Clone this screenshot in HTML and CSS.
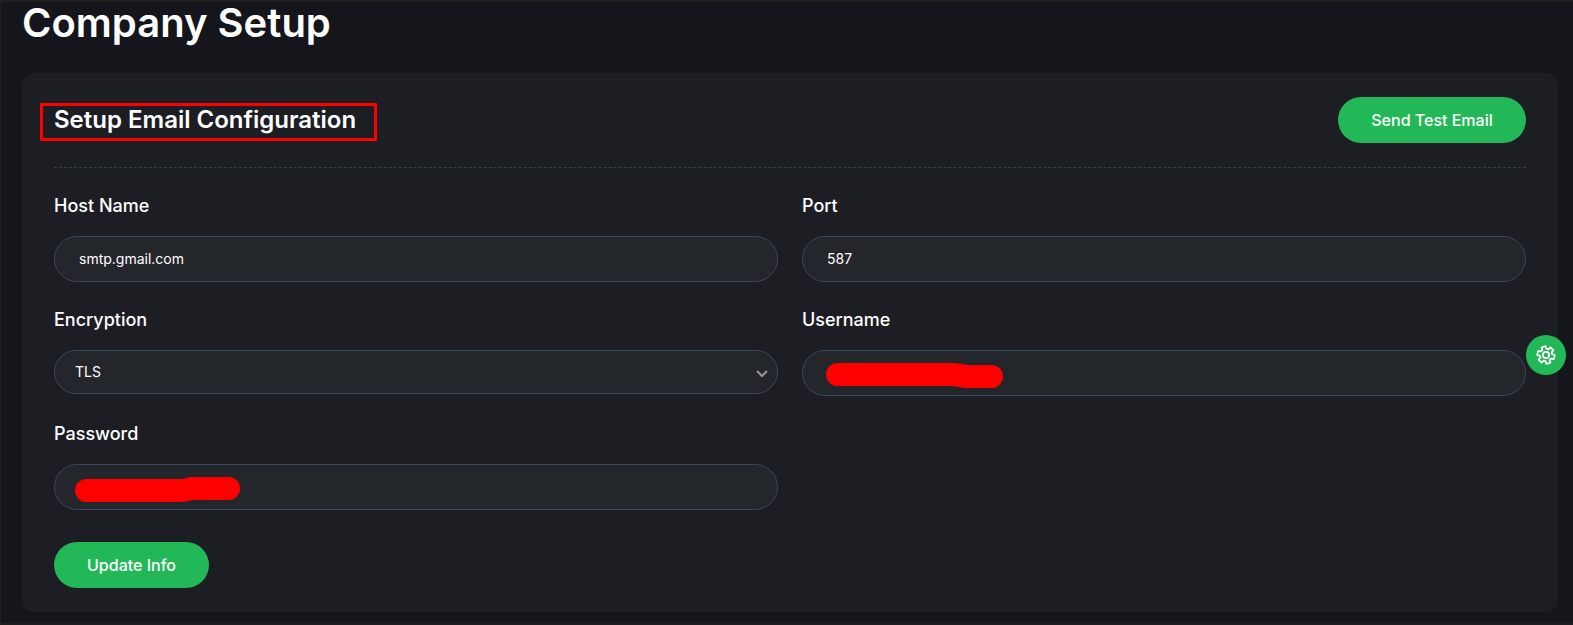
FILE: index.html
```html
<!DOCTYPE html>
<html lang="en">
<head>
<meta charset="utf-8">
<title>Company Setup</title>
<link rel="stylesheet" href="styles.css">
</head>
<body>
<main class="page">
  <h1 class="page-title">Company Setup</h1>
  <section class="card">
    <header class="card-header">
      <h2 class="card-title">Setup Email Configuration<span class="highlight"></span></h2>
      <button class="btn btn-test" type="button">Send Test Email</button>
    </header>
    <form class="form">
      <div class="field">
        <label class="label" for="host">Host Name</label>
        <input class="control" id="host" type="text" value="smtp.gmail.com">
      </div>
      <div class="field">
        <label class="label" for="port">Port</label>
        <input class="control" id="port" type="text" value="587">
      </div>
      <div class="field">
        <label class="label" for="encryption">Encryption</label>
        <div class="select-wrap">
          <select class="control select" id="encryption"><option>TLS</option></select>
          <svg class="chevron" viewBox="0 0 12 8" aria-hidden="true"><path d="M1 1l5 5 5-5"/></svg>
        </div>
      </div>
      <div class="field">
        <label class="label" for="username">Username</label>
        <div class="masked">
          <input class="control" id="username" type="text">
          <svg class="scribble scribble-user" viewBox="0 0 178 26" aria-hidden="true"><path d="M11.5 11.5H126Q134 12 140 13.500H165.500"/></svg>
        </div>
      </div>
      <div class="field">
        <label class="label" for="password">Password</label>
        <div class="masked">
          <input class="control" id="password" type="password">
          <svg class="scribble scribble-pass" viewBox="0 0 166 26" aria-hidden="true"><path d="M11.500 13.500H107Q111 13.500 116 11.500H153.500"/></svg>
        </div>
      </div>
    </form>
    <button class="btn" type="button">Update Info</button>
  </section>
</main>
<button class="settings" type="button" aria-label="Settings">
  <svg class="gear" viewBox="-10 -10 20 20" aria-hidden="true">
    <path d="M-3.730-4.950L-4.400-7.620L-.31-8.790L.54-6.180L2.420-5.710L4.400-7.620L7.460-4.660L5.620-2.620L6.150-.76L8.800 0L7.770 4.130L5.080 3.560L3.730 4.950L4.400 7.620L.31 8.790L-.54 6.180L-2.420 5.710L-4.400 7.620L-7.460 4.660L-5.620 2.620L-6.150 .76L-8.800 0L-7.770-4.130L-5.080-3.560z"/>
    <circle r="3.1"/>
  </svg>
</button>
</body>
</html>
```
FILE: styles.css
```css
* { box-sizing: border-box; }

body {
  margin: 0;
  height: 625px;
  overflow: hidden;
  border: solid #1f1f1f;
  border-width: 2px 0 2px 1px;
  background: #15161b;
  color: #fff;
  font-family: Inter, "Liberation Sans", sans-serif;
}

.page { padding: 0 15px 0 21px; }

.page-title {
  margin: 0;
  height: 71px;
  font-size: 40px;
  font-weight: 600;
  line-height: 42px;
}

.card {
  height: 539px;
  padding: 24px 32px;
  border-radius: 12px;
  background: #1d1e24;
}

.card-header {
  display: flex;
  align-items: flex-start;
  justify-content: space-between;
  height: 71px;
  margin-bottom: 24px;
  border-bottom: 1px dashed #24483a;
}

.card-title {
  position: relative;
  margin: 0;
  font-size: 24px;
  font-weight: 600;
  line-height: 46px;
}

.highlight {
  position: absolute;
  top: 6px;
  left: -14px;
  width: 337px;
  height: 38px;
  border: 3px solid #f00;
  border-radius: 1px;
}

.btn {
  height: 46px;
  padding: 0 33px;
  border: 0;
  border-radius: 23px;
  background: #22b858;
  color: #fff;
  font: 500 16px/24px Inter, "Liberation Sans", sans-serif;
}

.btn-test { width: 188px; white-space: nowrap; }

.form {
  display: grid;
  grid-template-columns: 1fr 1fr;
  gap: 24px;
  margin-bottom: 32px;
}

.field { height: 90px; }

.label {
  display: block;
  height: 44px;
  font-size: 18px;
  font-weight: 500;
  line-height: 28px;
}

.control {
  display: block;
  width: 100%;
  height: 46px;
  padding: 0 24px 2px;
  border: 1px solid #3d4760;
  border-radius: 23px;
  background: #23262b;
  color: #fff;
  font: 400 14px/20px Inter, "Liberation Sans", sans-serif;
}

.select {
  height: 44px;
  padding: 0 20px;
  appearance: none;
}

.select-wrap, .masked { position: relative; }

.chevron {
  position: absolute;
  top: 20px;
  right: 10px;
  width: 12px;
  height: 8px;
  fill: none;
  stroke: #999;
  stroke-width: 2;
}

.scribble {
  position: absolute;
  height: 26px;
  fill: none;
  stroke: #f00;
  stroke-width: 23;
  stroke-linecap: round;
  stroke-linejoin: round;
}

.scribble-user { top: 13px; left: 24px; width: 178px; }
.scribble-pass { top: 13px; left: 21px; width: 166px; }

.settings {
  position: fixed;
  top: 335px;
  right: 7px;
  width: 40px;
  height: 40px;
  padding: 10px;
  border: 0;
  border-radius: 50%;
  background: #22b858;
}

.gear {
  display: block;
  width: 20px;
  height: 20px;
  fill: none;
  stroke: #fff;
  stroke-width: 1.8;
  stroke-linejoin: round;
}
```
